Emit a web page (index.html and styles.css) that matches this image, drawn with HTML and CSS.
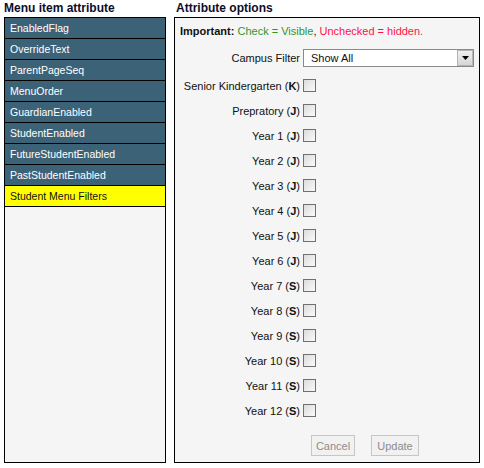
FILE: index.html
```html
<!DOCTYPE html>
<html>
<head>
<meta charset="utf-8">
<link rel="stylesheet" href="styles.css">
</head>
<body>
<div class="page">
  <div class="col col-left">
    <div class="title">Menu item attribute</div>
    <div class="panel list">
      <div class="item">EnabledFlag</div>
      <div class="item">OverrideText</div>
      <div class="item">ParentPageSeq</div>
      <div class="item">MenuOrder</div>
      <div class="item">GuardianEnabled</div>
      <div class="item">StudentEnabled</div>
      <div class="item">FutureStudentEnabled</div>
      <div class="item">PastStudentEnabled</div>
      <div class="item active">Student Menu Filters</div>
    </div>
  </div>
  <div class="col col-right">
    <div class="title">Attribute options</div>
    <div class="panel options">
      <div class="note"><b>Important:</b> <span class="ok">Check = Visible</span>, <span class="bad">Unchecked = hidden.</span></div>
      <div class="form">
        <div class="row row-select">
          <label class="lbl">Campus Filter</label>
          <div class="select"><span class="sel-text">Show All</span><span class="sel-btn"><svg width="7" height="4" viewBox="0 0 7 4"><path d="M0 0H7L3.5 4Z" fill="#000"/></svg></span></div>
        </div>
        <div class="row"><label class="lbl">Senior Kindergarten (<b>K</b>)</label><input type="checkbox" class="cb"></div>
        <div class="row"><label class="lbl">Prepratory (<b>J</b>)</label><input type="checkbox" class="cb"></div>
        <div class="row"><label class="lbl">Year 1 (<b>J</b>)</label><input type="checkbox" class="cb"></div>
        <div class="row"><label class="lbl">Year 2 (<b>J</b>)</label><input type="checkbox" class="cb"></div>
        <div class="row"><label class="lbl">Year 3 (<b>J</b>)</label><input type="checkbox" class="cb"></div>
        <div class="row"><label class="lbl">Year 4 (<b>J</b>)</label><input type="checkbox" class="cb"></div>
        <div class="row"><label class="lbl">Year 5 (<b>J</b>)</label><input type="checkbox" class="cb"></div>
        <div class="row"><label class="lbl">Year 6 (<b>J</b>)</label><input type="checkbox" class="cb"></div>
        <div class="row"><label class="lbl">Year 7 (<b>S</b>)</label><input type="checkbox" class="cb"></div>
        <div class="row"><label class="lbl">Year 8 (<b>S</b>)</label><input type="checkbox" class="cb"></div>
        <div class="row"><label class="lbl">Year 9 (<b>S</b>)</label><input type="checkbox" class="cb"></div>
        <div class="row"><label class="lbl">Year 10 (<b>S</b>)</label><input type="checkbox" class="cb"></div>
        <div class="row"><label class="lbl">Year 11 (<b>S</b>)</label><input type="checkbox" class="cb"></div>
        <div class="row"><label class="lbl">Year 12 (<b>S</b>)</label><input type="checkbox" class="cb"></div>
        <div class="row row-buttons">
          <span class="lbl"></span>
          <div class="buttons">
            <button class="btn btn-cancel" disabled>Cancel</button>
            <button class="btn btn-update" disabled>Update</button>
          </div>
        </div>
      </div>
    </div>
  </div>
</div>
</body>
</html>
```

FILE: styles.css
```css
html, body {
  margin: 0;
  padding: 0;
  background: #fff;
}
body {
  font-family: "Liberation Sans", Arial, sans-serif;
  font-size: 11px;
  color: #111;
}
.page {
  display: flex;
  gap: 8px;
  padding: 0 4px;
}
.col {
  display: flex;
  flex-direction: column;
}
.col-left { width: 162px; }
.col-right { width: 306px; }
.title {
  height: 17px;
  line-height: 17px;
  font-size: 12px;
  font-weight: bold;
  color: #0d0d2b;
}
.col-right .title { padding-left: 2px; }
.panel {
  box-sizing: border-box;
  height: 446px;
  border: 1px solid #000;
  background: #f5f5f5;
}
.item {
  height: 20px;
  line-height: 20px;
  border-bottom: 1px solid #000;
  background: #3c6278;
  color: #fff;
  font-size: 10.5px;
  padding-left: 5px;
}
.item.active {
  background: #ffff00;
  color: #111;
}
.options {
  padding: 5px 0 0 5px;
}
.note {
  line-height: 16px;
}
.ok { color: #2f962f; }
.bad { color: #ff1144; }
.form {
  margin-top: 6px;
  display: flex;
  flex-direction: column;
}
.row {
  display: flex;
  align-items: center;
  height: 25px;
  gap: 3px;
}
.row-select {
  margin-bottom: 3px;
}
.lbl {
  width: 120px;
  text-align: right;
  white-space: nowrap;
  color: #111;
}
.select {
  box-sizing: border-box;
  width: 171px;
  height: 18px;
  border: 1px solid #8a8a8a;
  background: #fff;
  display: flex;
  align-items: center;
  justify-content: space-between;
}
.sel-text {
  padding-left: 7px;
}
.sel-btn {
  box-sizing: border-box;
  width: 16px;
  height: 16px;
  border: 1px solid #b5b5b5;
  background: linear-gradient(#f0f0f0, #d6d6d6);
  display: flex;
  align-items: center;
  justify-content: center;
}
.cb {
  appearance: none;
  -webkit-appearance: none;
  box-sizing: border-box;
  width: 13px;
  height: 13px;
  margin: 0;
  border: 1px solid #707070;
  background: linear-gradient(135deg, #dcdcdc, #fafafa);
}
.row-buttons {
  margin-top: 12px;
  height: 21px;
}
.buttons {
  display: flex;
  gap: 16px;
  margin-left: 8px;
}
.btn {
  box-sizing: border-box;
  height: 21px;
  border: 1px solid #c6c6c6;
  background: #f1f1f1;
  color: #8c8c8c;
  font-family: "Liberation Sans", Arial, sans-serif;
  font-size: 11px;
  padding: 0;
}
.btn-cancel { width: 44px; }
.btn-update { width: 48px; }
```
